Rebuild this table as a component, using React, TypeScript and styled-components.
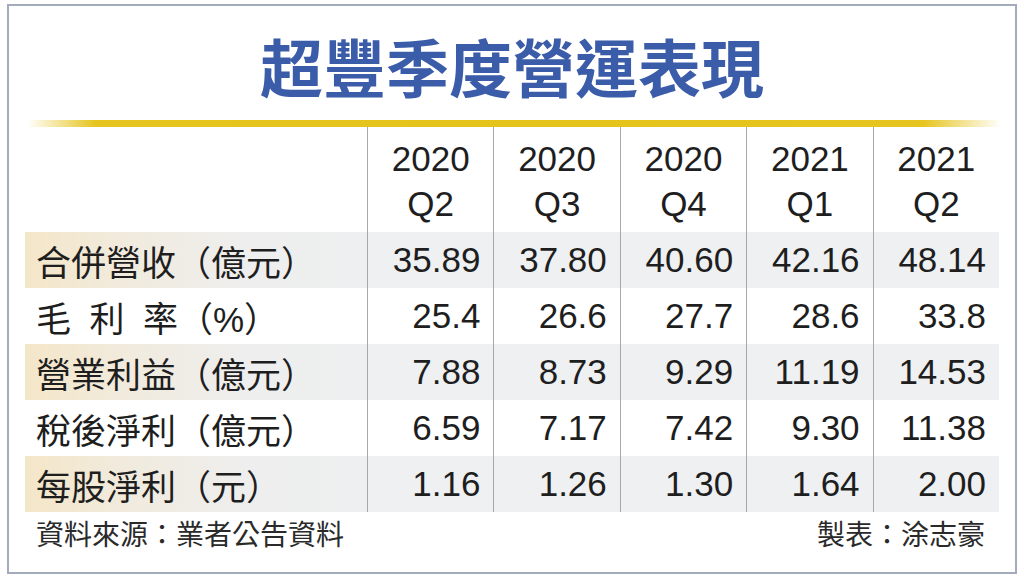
import React from "react";
import styled, { createGlobalStyle } from "styled-components";

const GlobalStyle = createGlobalStyle`
  html, body {
    margin: 0;
    padding: 0;
    background: #ffffff;
  }
  body {
    font-family: "Liberation Sans", "Noto Sans CJK TC", sans-serif;
  }
`;

const Page = styled.div`
  width: 1024px;
  height: 584px;
  padding: 4px 0 0 7px;
  box-sizing: border-box;
  background: #ffffff;
`;

const Frame = styled.div`
  width: 1010px;
  height: 570px;
  box-sizing: border-box;
  border: 2px solid #a3abbc;
  padding: 0 16px;
  display: flex;
  flex-direction: column;
`;

const Title = styled.h1`
  margin: 0;
  padding-top: 4px;
  height: 114px;
  box-sizing: border-box;
  line-height: 110px;
  text-align: center;
  font-family: "Noto Sans CJK TC", sans-serif;
  font-size: 63px;
  font-weight: 700;
  color: #3b5ca8;
`;

const Rule = styled.div`
  height: 7px;
  margin: 0 -2px 0 2px;
  background: linear-gradient(
    90deg,
    rgba(229, 196, 28, 0) 0%,
    #e6c520 7%,
    #e4c31a 50%,
    #e6c520 92%,
    rgba(229, 196, 28, 0) 100%
  );
`;

const Table = styled.div`
  display: grid;
  grid-template-columns: 342px repeat(5, 1fr);
  width: 974px;
`;

const HeadCell = styled.div<{ $first?: boolean }>`
  height: 105px;
  box-sizing: border-box;
  padding-top: 9px;
  border-left: ${(p) => (p.$first ? "none" : "1px solid #a8a8a8")};
  display: flex;
  flex-direction: column;
  align-items: center;
  font-size: 35px;
  line-height: 45px;
  color: #1e1e1e;
`;

const LabelCell = styled.div<{ $shade: boolean }>`
  height: 56px;
  padding-left: 11px;
  display: flex;
  align-items: center;
  font-size: 35px;
  color: #1e1e1e;
  white-space: nowrap;
  background: ${(p) =>
    p.$shade
      ? "linear-gradient(90deg, #f4e6c8 0%, #f1ebde 30%, #eeeeee 65%, #eeeff0 100%)"
      : "transparent"};
`;

const Spread = styled.span`
  display: inline-block;
  width: 142px;
  text-align: justify;
  text-align-last: justify;
`;

const ValueCell = styled.div<{ $shade: boolean }>`
  height: 56px;
  box-sizing: border-box;
  padding-right: 13px;
  border-left: 1px solid #a8a8a8;
  display: flex;
  align-items: center;
  justify-content: flex-end;
  font-size: 35px;
  color: #1e1e1e;
  background: ${(p) => (p.$shade ? "#eef0f2" : "transparent")};
`;

const Footer = styled.div`
  display: flex;
  justify-content: space-between;
  width: 974px;
  padding: 0 14px 0 11px;
  box-sizing: border-box;
  font-family: "Noto Sans CJK TC", sans-serif;
  font-size: 28px;
  line-height: 42px;
  color: #2a2a2a;
`;

const periods = [
  ["2020", "Q2"],
  ["2020", "Q3"],
  ["2020", "Q4"],
  ["2021", "Q1"],
  ["2021", "Q2"],
];

const rows: { label: React.ReactNode; values: string[] }[] = [
  { label: "合併營收（億元）", values: ["35.89", "37.80", "40.60", "42.16", "48.14"] },
  {
    label: (
      <>
        <Spread>毛利率</Spread>（%）
      </>
    ),
    values: ["25.4", "26.6", "27.7", "28.6", "33.8"],
  },
  { label: "營業利益（億元）", values: ["7.88", "8.73", "9.29", "11.19", "14.53"] },
  { label: "稅後淨利（億元）", values: ["6.59", "7.17", "7.42", "9.30", "11.38"] },
  { label: "每股淨利（元）", values: ["1.16", "1.26", "1.30", "1.64", "2.00"] },
];

export default function App() {
  return (
    <Page>
      <GlobalStyle />
      <Frame>
        <Title>超豐季度營運表現</Title>
        <Rule />
        <Table>
          <HeadCell $first />
          {periods.map(([year, q], i) => (
            <HeadCell key={i}>
              <span>{year}</span>
              <span>{q}</span>
            </HeadCell>
          ))}
          {rows.map((row, r) => (
            <React.Fragment key={r}>
              <LabelCell $shade={r % 2 === 0}>{row.label}</LabelCell>
              {row.values.map((v, c) => (
                <ValueCell key={c} $shade={r % 2 === 0}>
                  {v}
                </ValueCell>
              ))}
            </React.Fragment>
          ))}
        </Table>
        <Footer>
          <span>資料來源：業者公告資料</span>
          <span>製表：涂志豪</span>
        </Footer>
      </Frame>
    </Page>
  );
}
